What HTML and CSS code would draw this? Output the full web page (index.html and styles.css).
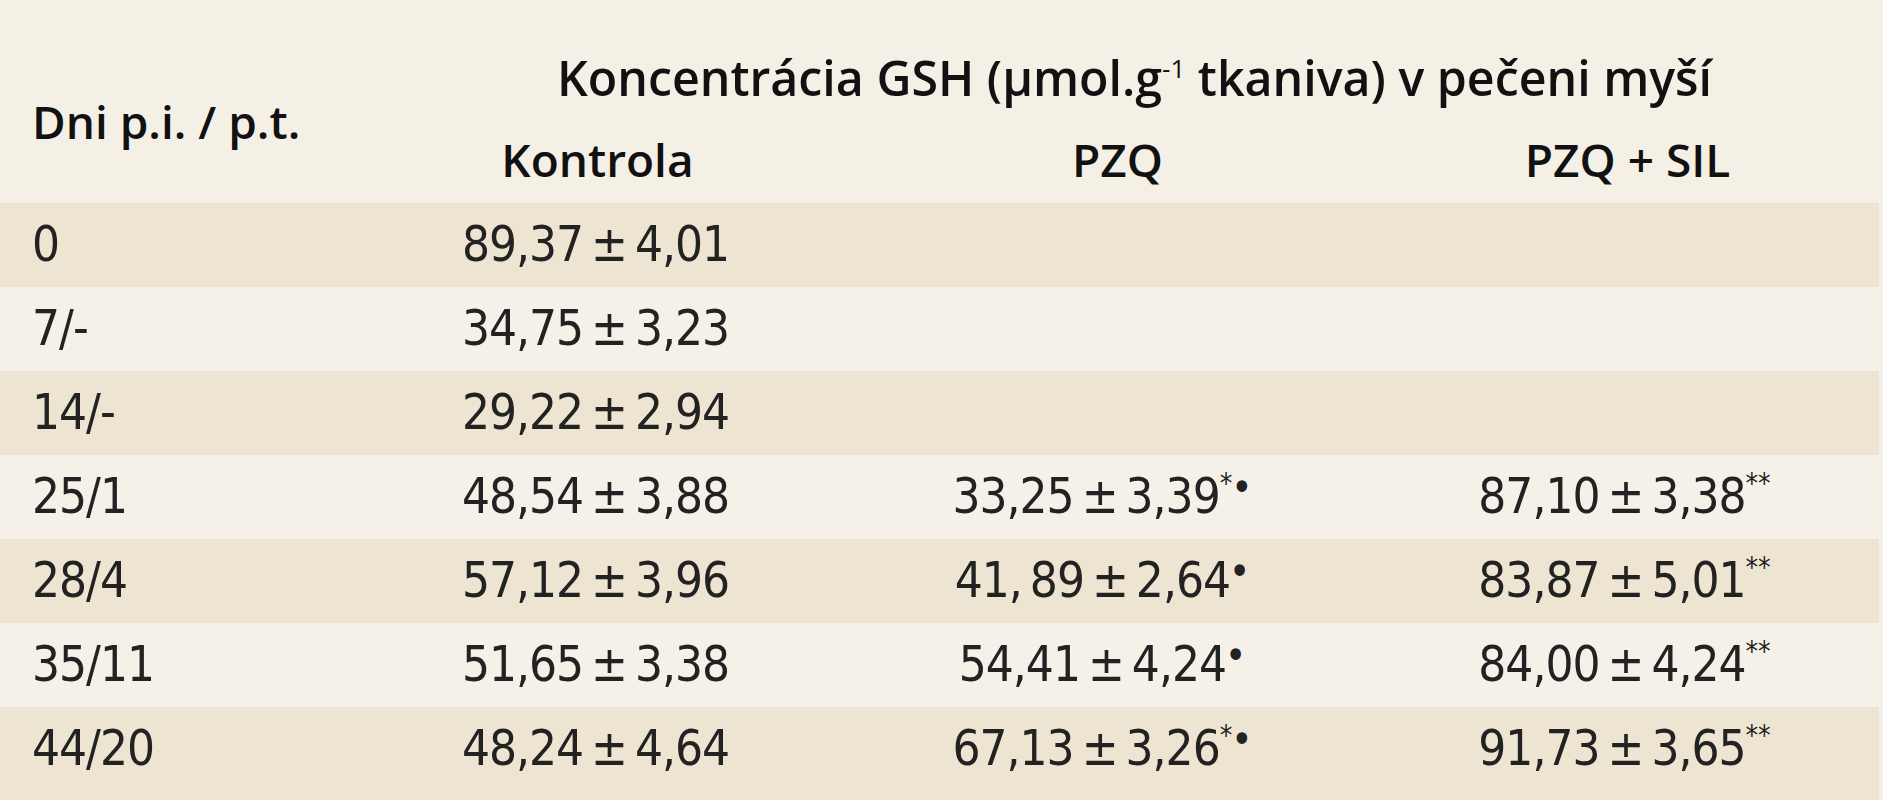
FILE: index.html
```html
<!DOCTYPE html>
<html lang="sk">
<head>
<meta charset="utf-8">
<title>Koncentrácia GSH</title>
<link rel="stylesheet" href="styles.css">
</head>
<body>
<div class="table">
  <div class="head">
    <div class="h-days">Dni p.i. / p.t.</div>
    <div class="h-title">Koncentrácia GSH (μmol.g<sup class="exp">-1</sup> tkaniva) v pečeni myší</div>
    <div class="h-sub">Kontrola</div>
    <div class="h-sub">PZQ</div>
    <div class="h-sub">PZQ + SIL</div>
  </div>
  <div class="row shade">
    <div class="c-day">0</div>
    <div class="c-k">89,37 ± 4,01</div>
    <div class="c-p"></div>
    <div class="c-s"></div>
  </div>
  <div class="row">
    <div class="c-day">7/-</div>
    <div class="c-k">34,75 ± 3,23</div>
    <div class="c-p"></div>
    <div class="c-s"></div>
  </div>
  <div class="row shade">
    <div class="c-day">14/-</div>
    <div class="c-k">29,22 ± 2,94</div>
    <div class="c-p"></div>
    <div class="c-s"></div>
  </div>
  <div class="row">
    <div class="c-day">25/1</div>
    <div class="c-k">48,54 ± 3,88</div>
    <div class="c-p">33,25 ± 3,39<sup class="mk">*</sup><sup class="dot">•</sup></div>
    <div class="c-s">87,10 ± 3,38<sup class="mk">**</sup></div>
  </div>
  <div class="row shade">
    <div class="c-day">28/4</div>
    <div class="c-k">57,12 ± 3,96</div>
    <div class="c-p">41, 89 ± 2,64<sup class="dot">•</sup></div>
    <div class="c-s">83,87 ± 5,01<sup class="mk">**</sup></div>
  </div>
  <div class="row">
    <div class="c-day">35/11</div>
    <div class="c-k">51,65 ± 3,38</div>
    <div class="c-p">54,41 ± 4,24<sup class="dot">•</sup></div>
    <div class="c-s">84,00 ± 4,24<sup class="mk">**</sup></div>
  </div>
  <div class="row shade last">
    <div class="c-day">44/20</div>
    <div class="c-k">48,24 ± 4,64</div>
    <div class="c-p">67,13 ± 3,26<sup class="mk">*</sup><sup class="dot">•</sup></div>
    <div class="c-s">91,73 ± 3,65<sup class="mk">**</sup></div>
  </div>
</div>
</body>
</html>
```

FILE: styles.css
```css
html, body {
  margin: 0;
  padding: 0;
}
body {
  background: #f5f1e8;
  width: 1883px;
  height: 800px;
  overflow: hidden;
  color: #1a1a1a;
}
.table {
  width: 1879px;
}
.head {
  display: grid;
  grid-template-columns: 340px 515px 525px 499px;
  grid-template-rows: 122px 81px;
  background: #f4f0e6;
  font-family: "Open Sans", "DejaVu Sans", sans-serif;
  font-weight: 600;
  font-size: 46px;
  line-height: 60px;
  color: #111;
}
.h-days {
  grid-row: 1 / 3;
  grid-column: 1;
  padding: 91px 0 0 32px;
  white-space: nowrap;
}
.h-title {
  grid-row: 1;
  grid-column: 2 / 5;
  padding: 47px 0 0 50px;
  text-align: center;
  white-space: nowrap;
  font-size: 48.3px;
}
.exp {
  font-size: 26px;
  line-height: 0;
  vertical-align: 18px;
  font-weight: 400;
}
.h-sub {
  grid-row: 2;
  padding-top: 7px;
  text-align: center;
  white-space: nowrap;
}
.h-sub:last-child {
  padding-right: 4px;
}
.row {
  display: grid;
  grid-template-columns: 340px 515px 525px 499px;
  height: 84px;
  background: #f5f1e8;
  font-family: "DejaVu Sans Condensed", "Liberation Sans Narrow", sans-serif;
  font-size: 49px;
  letter-spacing: -1px;
  word-spacing: -5px;
  line-height: 84px;
  color: #222;
  white-space: nowrap;
}
.row.shade {
  background: #ede5d2;
}
.row.last {
  height: 97px;
}
.c-day {
  padding-left: 32px;
}
.c-k {
  text-align: center;
  padding-right: 4px;
}
.c-p {
  text-align: center;
  padding-right: 30px;
}
.c-s {
  text-align: center;
  padding-right: 10px;
}
.mk {
  font-size: 28px;
  letter-spacing: 0;
  line-height: 0;
  vertical-align: 20px;
}
.dot {
  font-size: 40px;
  letter-spacing: 0;
  line-height: 0;
  vertical-align: 12px;
  margin-left: -1px;
}
```
